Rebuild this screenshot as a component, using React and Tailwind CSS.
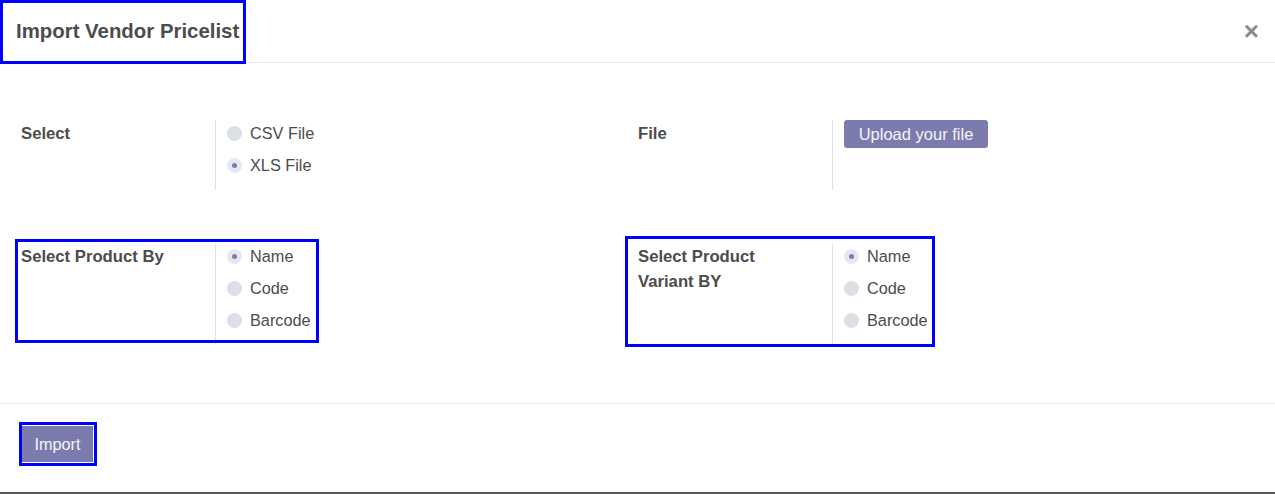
import React from 'react';

const Radio = ({ label, checked }) => (
  <div className="flex items-center h-[26px]">
    <span
      className={`w-[15px] h-[15px] rounded-full flex items-center justify-center ${
        checked ? 'bg-[#e6e8ef]' : 'bg-[#dcdfe5]'
      }`}
    >
      {checked && <span className="w-[5px] h-[5px] rounded-full bg-[#7c7bad]" />}
    </span>
    <span className="ml-[8px] text-[16.3px] text-[#4c4c4c]">{label}</span>
  </div>
);

const Field = ({ label, children, height }) => (
  <div className={`flex ${height}`}>
    <div className="w-[199px] pl-[5px] text-[16.7px] font-bold text-[#4c4c4c] leading-[25px] pt-[1px]">
      {label}
    </div>
    <div className="border-l border-[#dee2e6] pl-[11px] flex flex-col gap-[6px]">{children}</div>
  </div>
);

const App = () => {
  return (
    <div
      className="relative w-[1275px] h-[494px] bg-white border-b-2 border-[#555] flex flex-col"
      style={{ fontFamily: '"Liberation Sans", Arial, sans-serif' }}
    >
      {/* Header */}
      <div className="h-[63px] border-b border-[#e9ecef] flex items-center justify-between pl-[16px] pr-[16px] shrink-0">
        <h4 className="text-[20.4px] font-bold text-[#4c4c4c]">Import Vendor Pricelist</h4>
        <span className="text-[26px] font-bold text-[#8a8a8a] leading-none">×</span>
      </div>

      {/* Body */}
      <div className="flex-1 pl-4 pt-[57px]">
        <div className="grid grid-cols-[617px_617px]">
          <Field label="Select" height="h-[70px]">
            <Radio label="CSV File" />
            <Radio label="XLS File" checked />
          </Field>
          <Field label="File" height="h-[70px]">
            <button className="w-[144px] h-[28px] rounded-[3px] bg-[#7c7bad] text-[#f4f4fa] text-[16.5px]">
              Upload your file
            </button>
          </Field>
        </div>
        <div className="grid grid-cols-[617px_617px] mt-[50px]">
          <div className="pt-[3px]">
            <Field label="Select Product By" height="h-[102px]">
              <Radio label="Name" checked />
              <Radio label="Code" />
              <Radio label="Barcode" />
            </Field>
          </div>
          <div className="pt-[3px]">
            <Field label={<>Select Product<br />Variant BY</>} height="h-[102px]">
              <Radio label="Name" checked />
              <Radio label="Code" />
              <Radio label="Barcode" />
            </Field>
          </div>
        </div>
      </div>

      {/* Footer */}
      <div className="h-[89px] border-t border-[#e9ecef] shrink-0 pl-[22px] pt-[22px]">
        <button className="w-[71px] h-[36px] bg-[#7c7bad] text-[#f4f4fa] text-[16.3px]">Import</button>
      </div>

      {/* Annotation boxes */}
      <div className="absolute left-0 top-0 w-[246px] h-[64px] border-[3px] border-[#0000ff]" />
      <div className="absolute left-[15px] top-[239px] w-[304px] h-[104px] border-[3px] border-[#0000ff]" />
      <div className="absolute left-[625px] top-[236px] w-[310px] h-[111px] border-[3px] border-[#0000ff]" />
      <div className="absolute left-[19px] top-[422px] w-[78px] h-[44px] border-[3px] border-[#0000ff]" />
    </div>
  );
};

export default App;
